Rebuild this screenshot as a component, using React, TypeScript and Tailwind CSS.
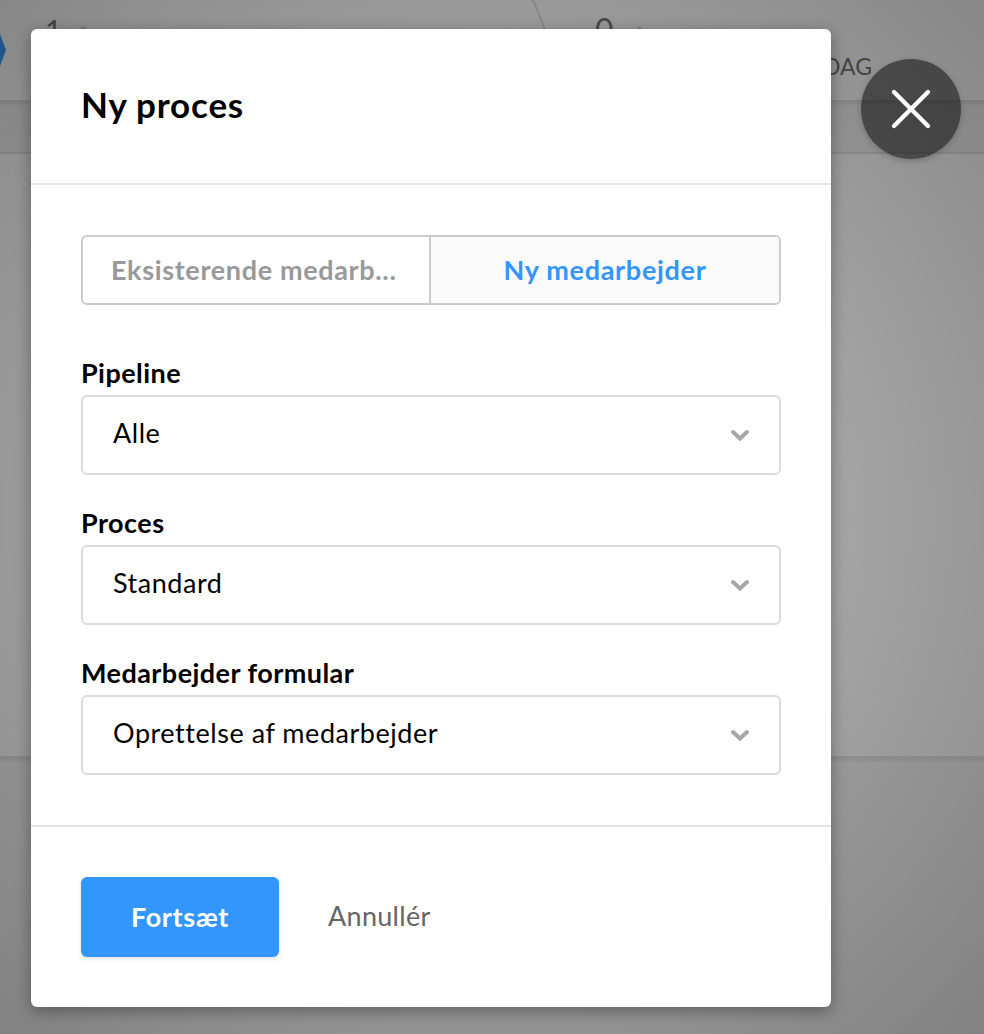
import { X } from 'lucide-react';

const TABS = [
    { id: 'existing', label: 'Eksisterende medarb...', active: false },
    { id: 'new', label: 'Ny medarbejder', active: true }
];

const FIELDS = [
    { id: 'pipeline', label: 'Pipeline', value: 'Alle' },
    { id: 'process', label: 'Proces', value: 'Standard' },
    { id: 'form', label: 'Medarbejder formular', value: 'Oprettelse af medarbejder' }
];

function Chevron() {
    return (
        <svg width="20" height="14" viewBox="0 0 20 14" fill="none" className="mt-0.5 shrink-0">
            <path d="M3 3l7 6.5 7-6.5" stroke="#a6a6a6" strokeWidth="4" strokeLinecap="round" />
        </svg>
    );
}

function SelectField({ label, value }: { label: string; value: string }) {
    return (
        <div className="flex h-[150px] flex-col">
            <div className="h-10 text-[27px] font-bold leading-9 tracking-[0.45px] text-black">{label}</div>
            <button className="flex h-20 w-full items-center justify-between rounded-md border-2 border-[#dcdcdc] bg-white pl-[30px] pr-[29px] text-left text-[27px] tracking-[0.54px] text-black">
                <span className="pb-[3px]">{value}</span>
                <Chevron />
            </button>
        </div>
    );
}

/* Page behind the dialog */
function Board() {
    return (
        <div className="flex h-full flex-col bg-white text-[#777]">
            <div className="relative h-[100px] shrink-0">
                <svg width="984" height="100" viewBox="0 0 984 100" fill="none" className="absolute left-0 top-0">
                    <path d="M0 34l6 16-6 16z" fill="#3aa0ff" />
                    <path d="M533 0l20 49-20 49" stroke="#e2e2e2" strokeWidth="2" />
                    <path d="M83 28l6 6-6 6M639 28l6 6-6 6" stroke="#dedede" strokeWidth="4" strokeLinecap="round" />
                </svg>
                <span className="absolute left-[45px] top-[14px] text-[29px] leading-8">1</span>
                <span className="absolute left-[595px] top-[14px] text-[32px] leading-8">0</span>
                <span className="absolute right-[112px] top-[52px] text-[23px] leading-7">I DAG</span>
            </div>
            <div className="h-[54px] shrink-0 border-b-2 border-[#e2e2e2] bg-[linear-gradient(#e2e2e2_2px,#e6e6e6_3px,#f3f3f3_6px)]" />
            <div className="h-[602px] shrink-0" />
            <div className="flex-1 bg-[linear-gradient(#e6e6e6_2px,#e4e4e4_3px,#f5f5f5_7px)]" />
        </div>
    );
}

export default function App() {
    return (
        <main className="relative h-[1034px] w-[984px] overflow-hidden font-['Lato',sans-serif]">
            <Board />

            <div className="absolute inset-0 flex items-start gap-[30px] bg-[radial-gradient(ellipse_farthest-corner,rgba(0,0,0,0.24),rgba(0,0,0,0.47))] pl-[31px] pt-[29px]">
                <section className="h-[978px] w-[800px] shrink-0 rounded-md bg-white shadow-[0_4px_16px_rgba(0,0,0,0.35)]">
                    <header className="flex h-[156px] items-center border-b-2 border-[#e4e4e4] px-[50px] pb-1">
                        <h1 className="text-[35px] font-bold leading-none tracking-[0.8px] text-black">Ny proces</h1>
                    </header>

                    <div className="h-[640px] px-[50px] pt-[50px]">
                        <div className="flex h-[70px] overflow-hidden rounded-md border-2 border-[#cbcbcb]">
                            {TABS.map((tab) => (
                                <button
                                    key={tab.id}
                                    className={
                                        tab.active
                                            ? 'flex-1 whitespace-nowrap border-l-2 border-[#cbcbcb] bg-[#fafafa] text-[27px] font-bold tracking-[0.7px] text-[#3296fd]'
                                            : 'w-[346px] shrink-0 whitespace-nowrap pl-7 text-left text-[27px] font-bold tracking-[0.65px] text-[#999]'
                                    }
                                >
                                    {tab.label}
                                </button>
                            ))}
                        </div>
                        <div className="pt-[50px]">
                            {FIELDS.map((field) => (
                                <SelectField key={field.id} label={field.label} value={field.value} />
                            ))}
                        </div>
                    </div>

                    <footer className="flex items-center border-t-2 border-[#e4e4e4] px-[50px] pt-[50px]">
                        <button className="h-20 w-[198px] rounded-md bg-[#3296fd] text-[27px] font-bold tracking-[0.7px] text-white shadow-[0_2px_4px_rgba(0,0,0,0.12)]">
                            Fortsæt
                        </button>
                        <button className="ml-[49px] pb-0.5 text-[27px] tracking-[0.3px] text-[#666]">Annullér</button>
                    </footer>
                </section>

                <button
                    aria-label="Luk"
                    className="mt-[30px] flex size-[100px] shrink-0 items-center justify-center rounded-full bg-black/50 text-white shadow-[0_2px_6px_rgba(0,0,0,0.2)]"
                >
                    <X size={68} strokeWidth={1.5} />
                </button>
            </div>
        </main>
    );
}
